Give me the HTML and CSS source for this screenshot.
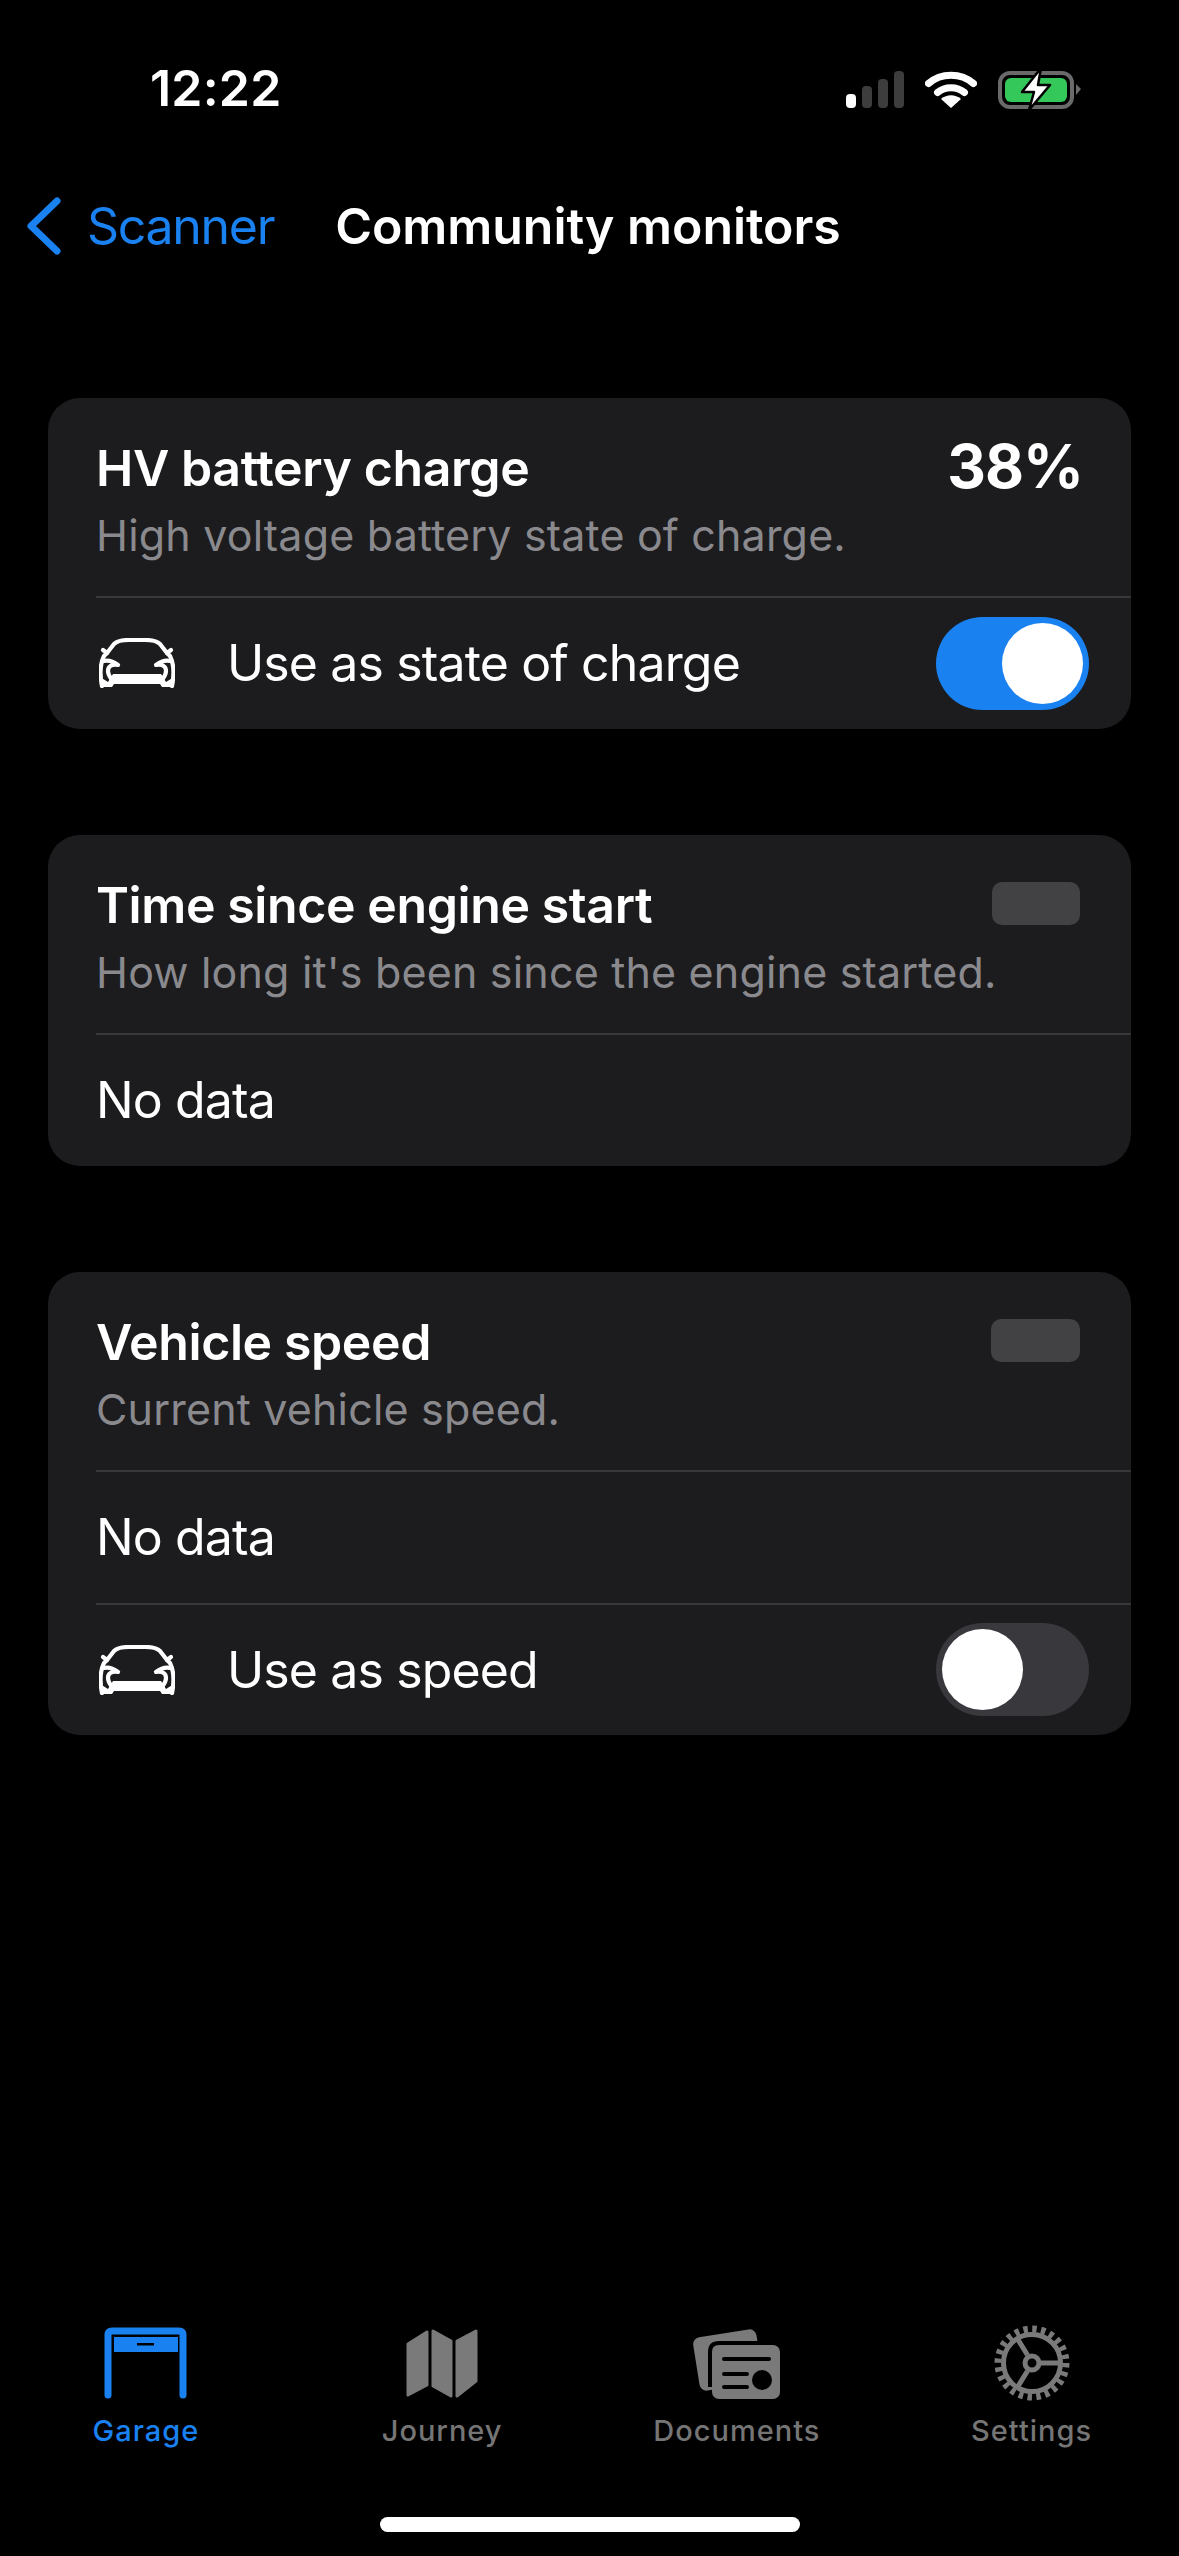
FILE: index.html
```html
<!DOCTYPE html>
<html lang="en">
<head>
<meta charset="utf-8">
<title>Community monitors</title>
<link rel="stylesheet" href="styles.css">
</head>
<body>
<div class="page">
  <header class="status">
    <span class="time">12:22</span>
    <div class="status-icons">
      <svg class="signal" viewBox="0 0 58 37" width="58" height="37">
        <rect x="0" y="23" width="10" height="14" rx="4" fill="#fff"/>
        <rect x="16" y="15" width="10" height="22" rx="4" fill="#3d3d3d"/>
        <rect x="32" y="8" width="10" height="29" rx="4" fill="#3d3d3d"/>
        <rect x="48" y="0" width="10" height="37" rx="4" fill="#3d3d3d"/>
      </svg>
      <svg class="wifi" viewBox="0 0 52 37" width="52" height="37">
        <path d="M3.5 12.5 C16 1.5 36 1.5 48.5 12.5" fill="none" stroke="#fff" stroke-width="7" stroke-linecap="round"/>
        <path d="M12.5 21.5 C20 15 32 15 39.5 21.5" fill="none" stroke="#fff" stroke-width="7" stroke-linecap="round"/>
        <path d="M16 28 C22 23 30 23 36 28 L26 37 Z" fill="#fff"/>
      </svg>
      <svg class="battery" viewBox="0 0 84 44" width="84" height="44">
        <rect x="2" y="6" width="72" height="34" rx="10" fill="none" stroke="#6a6a6a" stroke-width="4"/>
        <rect x="7" y="11" width="62" height="24" rx="6" fill="#34c759"/>
        <path d="M78 17 L83 22 L78 28 Z" fill="#6a6a6a"/>
        <path d="M43 1 L24 25 H36 L31 43 L52 18 H40 Z" fill="#fff" stroke="#000" stroke-width="2.5" stroke-linejoin="round"/>
      </svg>
    </div>
  </header>

  <nav class="nav">
    <svg class="chevron" viewBox="0 0 36 58" width="36" height="58">
      <path d="M31 4 L5 29 L31 54" fill="none" stroke="#1a81f0" stroke-width="7" stroke-linecap="round" stroke-linejoin="round"/>
    </svg>
    <span class="back-label">Scanner</span>
    <span class="nav-title">Community monitors</span>
  </nav>

  <main class="cards">
    <section class="card">
      <div class="head">
        <div class="head-text">
          <h2 class="title">HV battery charge</h2>
          <p class="desc">High voltage battery state of charge.</p>
        </div>
        <span class="value">38%</span>
      </div>
      <div class="row">
        <svg class="car" viewBox="0 0 76 50" width="76" height="50">
          <use href="#car-shape"/>
        </svg>
        <span class="row-label">Use as state of charge</span>
        <span class="switch on"><span class="knob"></span></span>
      </div>
    </section>

    <section class="card">
      <div class="head">
        <div class="head-text">
          <h2 class="title">Time since engine start</h2>
          <p class="desc">How long it's been since the engine started.</p>
        </div>
        <span class="badge"></span>
      </div>
      <div class="row"><span class="plain">No data</span></div>
    </section>

    <section class="card">
      <div class="head">
        <div class="head-text">
          <h2 class="title">Vehicle speed</h2>
          <p class="desc">Current vehicle speed.</p>
        </div>
        <span class="badge"></span>
      </div>
      <div class="row"><span class="plain">No data</span></div>
      <div class="row">
        <svg class="car" viewBox="0 0 76 50" width="76" height="50">
          <use href="#car-shape"/>
        </svg>
        <span class="row-label">Use as speed</span>
        <span class="switch"><span class="knob"></span></span>
      </div>
    </section>
  </main>

  <footer class="tabs">
    <div class="tab active">
      <svg class="tab-icon" viewBox="0 0 83 72" width="83" height="72">
        <path d="M4 68 V8 Q4 4 8 4 H75 Q79 4 79 8 V68" fill="none" stroke="#1a81f0" stroke-width="7" stroke-linecap="round"/>
        <path d="M10 10 H74 V25 H10 Z M33 16 V18.5 H50 V16 Z" fill="#1a81f0" fill-rule="evenodd"/>
      </svg>
      <span class="tab-label">Garage</span>
    </div>
    <div class="tab">
      <svg class="tab-icon" viewBox="0 0 72 72" width="72" height="72">
        <g fill="#7a7a7a" stroke="#7a7a7a" stroke-width="3" stroke-linejoin="round">
          <path d="M2 17 L21 5 V58 L2 68 Z"/>
          <path d="M27 4 L45 14 V69 L27 59 Z"/>
          <path d="M51 14 L70 4 V54 L51 69 Z"/>
        </g>
      </svg>
      <span class="tab-label">Journey</span>
    </div>
    <div class="tab">
      <svg class="tab-icon" viewBox="0 0 87 72" width="87" height="72">
        <rect x="3" y="6" width="64" height="54" rx="7" transform="rotate(-9 35 33)" fill="#7a7a7a"/>
        <rect x="19" y="18" width="68" height="54" rx="7" fill="#7a7a7a"/>
        <path d="M17 60 V25 Q17 16 26 16 H68" fill="none" stroke="#000" stroke-width="4"/>
        <path d="M31 32 H76 M31 47 H54 M31 60 H54" stroke="#000" stroke-width="4" stroke-linecap="round"/>
        <circle cx="69" cy="53" r="10" fill="#000"/>
      </svg>
      <span class="tab-label">Documents</span>
    </div>
    <div class="tab">
      <svg class="tab-icon" viewBox="0 0 76 76" width="76" height="76">
        <g fill="none" stroke="#7a7a7a" transform="translate(38 38)">
          <circle r="34" stroke-width="7" stroke-dasharray="4.45 4.45"/>
          <circle r="28.5" stroke-width="5"/>
          <circle r="7" stroke-width="5"/>
          <path d="M9 0 H28 M-4.5 -8 L-15 -25 M-4.5 8 L-15 25" stroke-width="5"/>
        </g>
      </svg>
      <span class="tab-label">Settings</span>
    </div>
  </footer>

  <div class="home-bar"><span class="home-pill"></span></div>
</div>

<svg class="defs" width="0" height="0" aria-hidden="true">
  <symbol id="car-shape" viewBox="0 0 76 50">
    <g fill="none" stroke="#fff" stroke-width="4.2" stroke-linecap="round" stroke-linejoin="round">
      <path d="M3 48 C1 38 1 26 5 18 L8 15 L15 6 C18 3 23 2 30 2 H46 C53 2 58 3 61 6 L68 15 L71 18 C75 26 75 38 73 48"/>
      <path d="M8 15 L4 12 M68 15 L72 12"/>
      <path d="M5 23 C10 22 15 24 19 27 C13 26 9 28 9 33 C9 37 11 39 13 42"/>
      <path d="M71 23 C66 22 61 24 57 27 C63 26 67 28 67 33 C67 37 65 39 63 42"/>
    </g>
    <path d="M1 49 V39 L9 44 L14 36 H62 L67 44 L75 39 V49 H63 L61 46 H15 L13 49 Z" fill="#fff"/>
  </symbol>
</svg>
</body>
</html>
```

FILE: styles.css
```css
* { box-sizing: border-box; }
html, body { margin: 0; padding: 0; background: #000; }
body { font-family: Inter, "Liberation Sans", sans-serif; color: #fff; }
.page { width: 1179px; height: 2556px; display: flex; flex-direction: column; overflow: hidden; background: #000; }
.defs { position: absolute; }

.status { height: 176px; display: flex; justify-content: space-between; align-items: flex-start; padding: 58px 97px 0 150px; flex: none; }
.time { font-size: 50px; font-weight: 600; line-height: 60px; letter-spacing: 0.2px; }
.status-icons { display: flex; align-items: center; margin-top: 9px; gap: 21px; }

.nav { height: 100px; display: flex; align-items: center; padding-left: 26px; flex: none; }
.chevron { flex: none; }
.back-label { margin-left: 25px; font-size: 50px; color: #1a81f0; letter-spacing: -1.3px; }
.nav-title { margin-left: 61px; font-size: 50px; font-weight: 600; letter-spacing: -0.05px; }

.cards { flex: 1; display: flex; flex-direction: column; gap: 106.5px; padding: 122px 48px 0; }
.card { background: #1c1c1e; border-radius: 32px; padding-left: 48px; overflow: hidden; }
.head { height: 198px; display: flex; justify-content: space-between; align-items: flex-start; padding: 38px 48px 0 0; }
.head-text { min-width: 0; white-space: nowrap; }
.title { margin: 0; font-size: 50px; line-height: 65px; font-weight: 600; letter-spacing: -0.4px; }
.desc { margin: 7px 0 0; font-size: 43px; line-height: 54px; color: #8a8a8e; letter-spacing: 0.18px; }
.value { font-size: 60px; font-weight: 700; line-height: 62px; letter-spacing: -1px; margin-top: -1px; }
.badge { width: 89px; height: 43px; margin: 9px 3px 0 0; background: #424244; border-radius: 10px; }
.row { height: 132.5px; border-top: 2px solid #38383a; display: flex; align-items: center; padding-right: 42px; font-size: 50px; letter-spacing: -0.87px; }
.car { flex: none; margin-left: 3px; }
.row-label { margin-left: 52px; flex: 1; }
.plain { flex: 1; }
.switch { width: 153px; height: 93px; border-radius: 47px; background: #39393d; padding: 6px; display: flex; flex: none; }
.switch.on { background: #1a81f0; justify-content: flex-end; }
.knob { width: 81px; height: 81px; border-radius: 50%; background: #fff; }

.tabs { display: grid; grid-template-columns: repeat(4, 1fr); flex: none; height: 162px; }
.tab { display: flex; flex-direction: column; align-items: center; color: #757575; }
.tab.active { color: #1a81f0; margin-right: 3px; }
.tab-icon { height: 76px; flex: none; }
.tab-label { font-size: 29px; line-height: 36px; font-weight: 500; letter-spacing: 1px; margin-top: 12px; }

.home-bar { height: 69px; flex: none; padding-top: 30px; display: flex; justify-content: center; align-items: flex-start; }
.home-pill { width: 420px; height: 15px; border-radius: 8px; background: #fff; }
```
